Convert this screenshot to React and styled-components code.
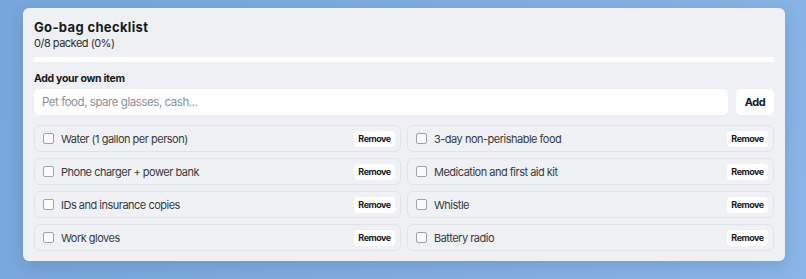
import React from "react";
import styled, { createGlobalStyle } from "styled-components";

const Global = createGlobalStyle`
  html, body { margin: 0; padding: 0; }
  body {
    width: 806px; height: 279px; overflow: hidden;
    background: linear-gradient(120deg, #78a5da 0%, #80addf 50%, #8ab7e8 100%);
    font-family: Inter, "Noto Sans", sans-serif;
    -webkit-font-smoothing: antialiased;
  }
`;

const Page = styled.div`
  padding: 8px 21px 0 23px;
`;

const Card = styled.section`
  width: 762px;
  box-sizing: border-box;
  background: #eef0f3;
  border-radius: 6px;
  padding: 11px 11px 10px;
  box-shadow: 0 6px 16px rgba(40, 70, 120, 0.18);
  display: flex;
  flex-direction: column;
`;

const Title = styled.h1`
  margin: 0;
  font-size: 13px;
  line-height: 16px;
  font-weight: 700;
  letter-spacing: 0.35px;
  color: #17191c;
`;

const Subtitle = styled.div`
  margin-top: 1px;
  font-size: 11px;
  line-height: 14px;
  letter-spacing: -0.5px;
  color: #2b2e33;
`;

const Bar = styled.div`
  margin-top: 7px;
  height: 5px;
  border-radius: 3px;
  background: #ffffff;
  overflow: hidden;
`;

const Label = styled.div`
  margin-top: 10px;
  font-size: 10.5px;
  line-height: 14px;
  font-weight: 700;
  letter-spacing: -0.3px;
  color: #17191c;
`;

const AddRow = styled.div`
  margin-top: 3px;
  display: flex;
  gap: 8px;
`;

const Input = styled.input`
  flex: 1;
  height: 26px;
  box-sizing: border-box;
  border: none;
  border-radius: 5px;
  background: #ffffff;
  padding: 0 8px;
  font-family: inherit;
  font-size: 11.5px;
  letter-spacing: -0.45px;
  color: #222;
  outline: none;
  &::placeholder { color: #8b9098; }
`;

const Button = styled.button`
  border: none;
  background: #ffffff;
  font-family: inherit;
  font-weight: 700;
  color: #16181b;
  cursor: pointer;
  padding: 0;
  letter-spacing: -0.5px;
  font-size: ${(p) => (p.$small ? "9px" : "11px")};
  height: ${(p) => (p.$small ? "16px" : "26px")};
  width: ${(p) => (p.$small ? "41px" : "38px")};
  border-radius: ${(p) => (p.$small ? "4px" : "5px")};
`;

const Grid = styled.div`
  margin-top: 10px;
  display: grid;
  grid-template-columns: 1fr 1fr;
  gap: 6px;
`;

const Item = styled.label`
  height: 27px;
  box-sizing: border-box;
  border: 1px solid #e1e3e7;
  border-radius: 6px;
  background: #eff1f4;
  display: flex;
  align-items: center;
  padding: 0 5px 0 8px;
`;

const Box = styled.span`
  width: 11px;
  height: 11px;
  box-sizing: border-box;
  border: 1px solid #9fa3aa;
  border-radius: 2px;
  background: #fbfbfc;
  flex-shrink: 0;
`;

const ItemText = styled.span`
  margin-left: 7px;
  flex: 1;
  font-size: 11px;
  letter-spacing: -0.5px;
  color: #383b40;
`;

const items = [
  "Water (1 gallon per person)",
  "3-day non-perishable food",
  "Phone charger + power bank",
  "Medication and first aid kit",
  "IDs and insurance copies",
  "Whistle",
  "Work gloves",
  "Battery radio",
];

export default function App() {
  return (
    <Page>
      <Global />
      <Card>
        <Title>Go-bag checklist</Title>
        <Subtitle>0/8 packed (0%)</Subtitle>
        <Bar />
        <Label>Add your own item</Label>
        <AddRow>
          <Input placeholder="Pet food, spare glasses, cash..." />
          <Button>Add</Button>
        </AddRow>
        <Grid>
          {items.map((t) => (
            <Item key={t}>
              <Box />
              <ItemText>{t}</ItemText>
              <Button $small>Remove</Button>
            </Item>
          ))}
        </Grid>
      </Card>
    </Page>
  );
}
